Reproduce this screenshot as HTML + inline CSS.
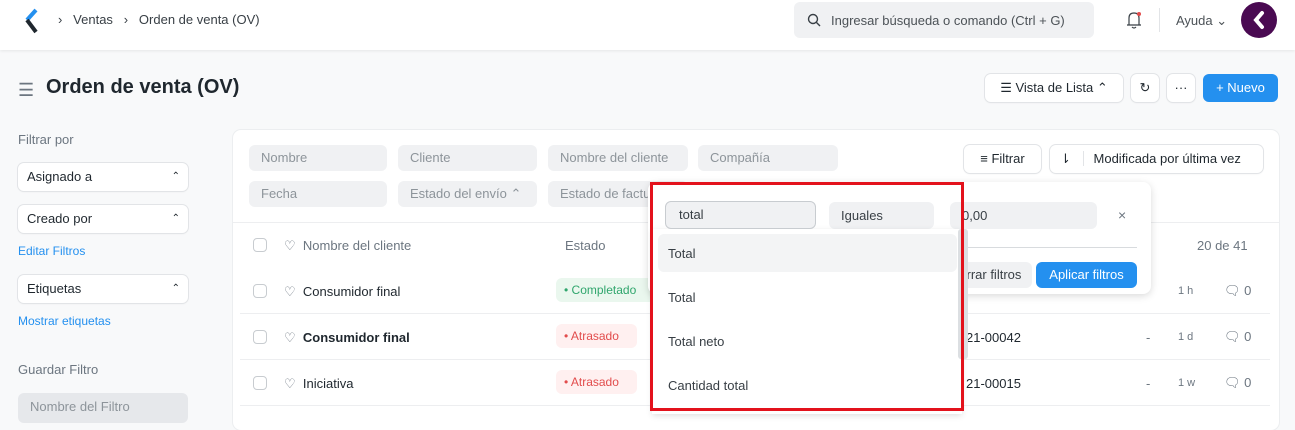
<!DOCTYPE html>
<html><head><meta charset="utf-8"><style>
*{box-sizing:border-box;margin:0;padding:0}
body{width:1295px;height:414px;overflow:hidden;background:#f8f9fa;font-family:"Liberation Sans",sans-serif;color:#1f272e;position:relative;font-size:13px}
.a{position:absolute}
.nav{left:0;top:0;width:1295px;height:50px;background:#fff;box-shadow:0 1px 3px rgba(0,0,0,.08)}
.in{background:#f0f1f3;border-radius:6px;color:#8d949a;font-size:13px;padding-left:12px;line-height:26px;height:26px}
.sel{background:#fff;border-radius:6px;box-shadow:0 0 0 1px #e2e4e7,0 1px 2px rgba(0,0,0,.05);height:28px;line-height:28px;padding-left:9px;font-size:13px}
.btn{background:#fff;border-radius:6px;box-shadow:0 0 0 1px #e2e4e7,0 1px 2px rgba(0,0,0,.06);height:28px;line-height:28px;font-size:13px;text-align:center}
.cb{width:14px;height:14px;border:1px solid #c8ccd0;border-radius:4px;background:#fff}
.hr{height:1px;background:#edeef0}
.muted{color:#6c7680}
</style></head><body>
<div class="a nav"></div>
<svg class="a" style="left:22px;top:8px" width="18" height="26" viewBox="0 0 18 26"><path d="M14 2 L5 12" stroke="#2490ef" stroke-width="4"/><path d="M5 12 L14 24" stroke="#1f272e" stroke-width="4"/></svg>
<div class="a" style="left:58px;top:12px;font-size:13px;color:#383f45">›&nbsp;&nbsp;&nbsp;Ventas&nbsp;&nbsp;&nbsp;›&nbsp;&nbsp;&nbsp;Orden de venta (OV)</div>
<div class="a" style="left:794px;top:2px;width:300px;height:36px;background:#f0f1f3;border-radius:6px"></div>
<svg class="a" style="left:807px;top:13px" width="14" height="14"><circle cx="6" cy="6" r="4.5" fill="none" stroke="#383f45" stroke-width="1.4"/><path d="M9.5 9.5L13 13" stroke="#383f45" stroke-width="1.4"/></svg>
<div class="a" style="left:831px;top:13px;color:#4c5257;font-size:13px">Ingresar búsqueda o comando (Ctrl + G)</div>
<svg class="a" style="left:1125px;top:10px" width="18" height="20"><path d="M4 15 L4 8 Q4 3 9 3 Q14 3 14 8 L14 15 Z M2 15 H16 M7 17 Q9 19 11 17" fill="none" stroke="#383f45" stroke-width="1.2"/><circle cx="14" cy="4" r="2" fill="#e24c4c"/></svg>
<div class="a" style="left:1159px;top:8px;width:1px;height:24px;background:#e2e4e7"></div>
<div class="a" style="left:1176px;top:13px;color:#4c5257;font-size:13px">Ayuda ⌄</div>
<div class="a" style="left:1241px;top:2px;width:36px;height:36px;border-radius:50%;background:#4a0a52"></div>
<svg class="a" style="left:1251px;top:10px" width="16" height="20"><path d="M11 3 L5 10 L11 17" stroke="#fff" stroke-width="4" fill="none" stroke-linecap="round"/></svg>

<div class="a" style="left:18px;top:80px;font-size:18px;color:#6c7680">☰</div>
<div class="a" style="left:46px;top:76px;font-size:20px;font-weight:bold">Orden de venta (OV)</div>
<div class="a btn" style="left:985px;top:74px;width:138px">☰ Vista de Lista ⌃</div>
<div class="a btn" style="left:1131px;top:74px;width:28px">↻</div>
<div class="a btn" style="left:1167px;top:74px;width:28px">···</div>
<div class="a btn" style="left:1203px;top:74px;width:75px;background:#2490ef;color:#fff;box-shadow:none">+ Nuevo</div>

<div class="a muted" style="left:18px;top:132px;font-size:13px">Filtrar por</div>
<div class="a sel" style="left:18px;top:163px;width:170px">Asignado a<span style="float:right;margin-right:8px;font-size:10px">⌃</span></div>
<div class="a sel" style="left:18px;top:205px;width:170px">Creado por<span style="float:right;margin-right:8px;font-size:10px">⌃</span></div>
<div class="a" style="left:18px;top:244px;color:#2490ef;font-size:12px">Editar Filtros</div>
<div class="a sel" style="left:18px;top:275px;width:170px">Etiquetas<span style="float:right;margin-right:8px;font-size:10px">⌃</span></div>
<div class="a" style="left:18px;top:314px;color:#2490ef;font-size:12px">Mostrar etiquetas</div>
<div class="a muted" style="left:18px;top:362px;font-size:13px">Guardar Filtro</div>
<div class="a in" style="left:18px;top:393px;width:170px;height:30px;line-height:28px;background:#e6e8eb">Nombre del Filtro</div>

<div class="a" style="left:233px;top:130px;width:1046px;height:300px;background:#fff;border-radius:8px;box-shadow:0 0 0 1px #eceef0"></div>
<div class="a in" style="left:249px;top:145px;width:138px">Nombre</div>
<div class="a in" style="left:398px;top:145px;width:139px">Cliente</div>
<div class="a in" style="left:548px;top:145px;width:140px">Nombre del cliente</div>
<div class="a in" style="left:698px;top:145px;width:140px">Compañía</div>
<div class="a in" style="left:249px;top:181px;width:138px">Fecha</div>
<div class="a in" style="left:398px;top:181px;width:139px">Estado del envío ⌃</div>
<div class="a in" style="left:548px;top:181px;width:140px">Estado de factura</div>
<div class="a btn" style="left:964px;top:145px;width:77px">≡ Filtrar</div>
<div class="a btn" style="left:1050px;top:145px;width:213px;text-align:left;padding-left:10px">⇂ <span style="border-left:1px solid #e2e4e7;padding-left:10px;margin-left:8px">Modificada por última vez</span></div>
<div class="a hr" style="left:233px;top:222px;width:1046px"></div>

<div class="a cb" style="left:253px;top:238px"></div><div class="a muted" style="left:284px;top:238px">♡&nbsp;&nbsp;Nombre del cliente</div>
<div class="a muted" style="left:565px;top:238px">Estado</div>
<div class="a muted" style="left:1197px;top:238px">20 de 41</div>

<div class="a cb" style="left:253px;top:284px"></div><div class="a" style="left:284px;top:284px"><span class="muted">♡</span>&nbsp;&nbsp;Consumidor final</div>
<div class="a" style="left:556px;top:278px;width:100px;height:24px;background:#eaf7ee;color:#30a66d;border-radius:6px;line-height:24px;padding-left:8px;font-size:12px">• Completado</div>
<div class="a muted" style="left:1178px;top:285px;font-size:11px">1 h</div><div class="a muted" style="left:1224px;top:283px">🗨 0</div>
<div class="a hr" style="left:240px;top:313px;width:1030px"></div>

<div class="a cb" style="left:253px;top:330px"></div><div class="a" style="left:284px;top:330px;font-weight:bold"><span class="muted" style="font-weight:normal">♡</span>&nbsp;&nbsp;Consumidor final</div>
<div class="a" style="left:556px;top:324px;width:81px;height:24px;background:#fff0f0;color:#e24c4c;border-radius:6px;line-height:24px;padding-left:8px;font-size:12px">• Atrasado</div>
<div class="a" style="left:966px;top:330px">21-00042</div>
<div class="a muted" style="left:1146px;top:330px">-</div><div class="a muted" style="left:1178px;top:331px;font-size:11px">1 d</div><div class="a muted" style="left:1224px;top:329px">🗨 0</div>
<div class="a hr" style="left:240px;top:359px;width:1030px"></div>

<div class="a cb" style="left:253px;top:376px"></div><div class="a" style="left:284px;top:376px"><span class="muted">♡</span>&nbsp;&nbsp;Iniciativa</div>
<div class="a" style="left:556px;top:370px;width:81px;height:24px;background:#fff0f0;color:#e24c4c;border-radius:6px;line-height:24px;padding-left:8px;font-size:12px">• Atrasado</div>
<div class="a" style="left:966px;top:376px">21-00015</div>
<div class="a muted" style="left:1146px;top:376px">-</div><div class="a muted" style="left:1178px;top:377px;font-size:11px">1 w</div><div class="a muted" style="left:1224px;top:375px">🗨 0</div>
<div class="a hr" style="left:240px;top:405px;width:1030px"></div>

<div class="a" style="left:648px;top:182px;width:503px;height:112px;background:#fff;border-radius:8px;box-shadow:0 2px 8px rgba(0,0,0,.15)"></div>
<div class="a in" style="left:829px;top:202px;width:105px;color:#383f45;height:27px;line-height:27px">Iguales</div>
<div class="a in" style="left:950px;top:202px;width:147px;color:#383f45;height:27px;line-height:27px">0,00</div>
<div class="a muted" style="left:1118px;top:207px;font-size:14px">×</div>
<div class="a" style="left:965px;top:247px;width:172px;height:1px;background:#d8dbde"></div>
<div class="a" style="left:940px;top:262px;width:92px;height:26px;background:#f0f1f3;border-radius:6px;line-height:26px;text-align:center;color:#383f45">Borrar filtros</div>
<div class="a" style="left:1036px;top:262px;width:101px;height:26px;background:#2490ef;border-radius:6px;line-height:26px;text-align:center;color:#fff">Aplicar filtros</div>

<div class="a" style="left:652px;top:229px;width:310px;height:185px;background:#fff;box-shadow:0 2px 6px rgba(0,0,0,.12)"></div>
<div class="a" style="left:958px;top:229px;width:10px;height:130px;background:#dcdfe2;border-radius:3px"></div>
<div class="a" style="left:665px;top:201px;width:151px;height:28px;background:#f0f1f3;border:1px solid #c8ccd0;border-radius:6px;padding-left:13px;line-height:26px;color:#383f45">total</div>
<div class="a" style="left:658px;top:234px;width:299px;height:38px;background:#f3f4f5;border-radius:6px"></div>
<div class="a" style="left:668px;top:246px;color:#383f45">Total</div>
<div class="a" style="left:668px;top:290px;color:#383f45">Total</div>
<div class="a" style="left:668px;top:334px;color:#383f45">Total neto</div>
<div class="a" style="left:668px;top:378px;color:#383f45">Cantidad total</div>
<div class="a" style="left:650px;top:182px;width:314px;height:229px;border:3px solid #e3121c"></div>
</body></html>
